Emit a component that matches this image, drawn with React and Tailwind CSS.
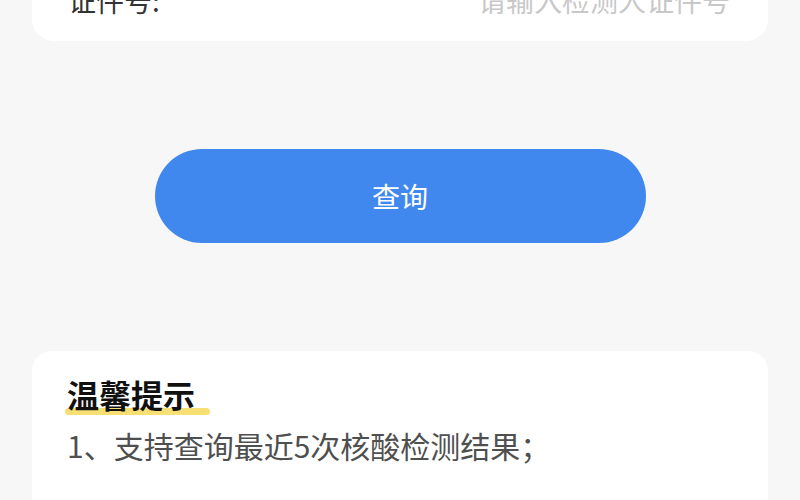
export default function App() {
  return (
    <div
      className="h-[500px] w-[800px] overflow-hidden bg-[#f7f7f7]"
      style={{ fontFamily: '"Noto Sans CJK SC", "Noto Sans", sans-serif' }}
    >
      <div className="mx-[32px] mt-[-40px] h-[81px] rounded-[22px] bg-white pl-[36px] pr-[38px] pt-[22px]">
        <div className="flex items-center justify-between text-[28px] leading-[36px]">
          <span className="text-[#333]">证件号:</span>
          <span className="text-[#c8c8c8]">请输入检测人证件号</span>
        </div>
      </div>

      <div className="mt-[108px] flex justify-center">
        <button
          type="button"
          className="h-[94px] w-[491px] rounded-full bg-[#4088ee] text-[28px] text-white"
        >
          查询
        </button>
      </div>

      <div className="mx-[32px] mt-[108px] h-[200px] rounded-[20px] bg-white px-[35px] pt-[21px]">
        <div className="relative inline-block">
          <span className="absolute bottom-[1px] left-[-2px] h-[7px] w-[145px] rounded-full bg-[#f8df74]" />
          <h2 className="relative text-[32px] font-bold leading-[44px] text-[#111]">温馨提示</h2>
        </div>
        <p className="mt-[9px] text-[30px] leading-[40px] text-[#4f4f4f]">1、支持查询最近5次核酸检测结果；</p>
      </div>
    </div>
  );
}
